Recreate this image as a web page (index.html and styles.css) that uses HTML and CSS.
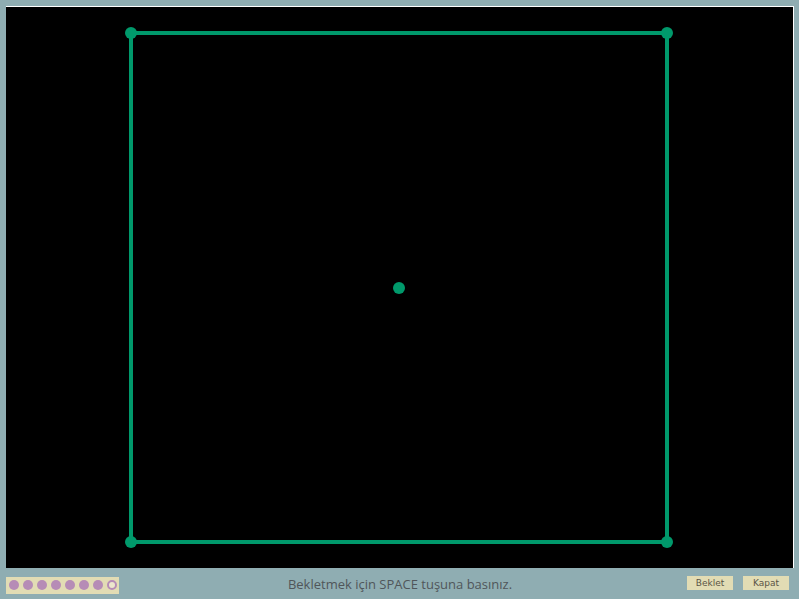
FILE: index.html
```html
<!DOCTYPE html>
<html lang="tr">
<head>
<meta charset="utf-8">
<title>Bekletmek</title>
<link rel="stylesheet" href="styles.css">
</head>
<body>
<div class="app">
  <div class="canvas">
    <svg class="board" width="787" height="561" viewBox="0 0 787 561">
      <rect x="125" y="26" width="536" height="509" fill="none" stroke="#00996b" stroke-width="4"/>
      <circle cx="125" cy="26" r="6" fill="#00996b"/>
      <circle cx="661" cy="26" r="6" fill="#00996b"/>
      <circle cx="125" cy="535" r="6" fill="#00996b"/>
      <circle cx="661" cy="535" r="6" fill="#00996b"/>
      <circle cx="393" cy="281" r="6" fill="#00996b"/>
    </svg>
  </div>
  <div class="bar">
    <div class="dots">
      <span class="dot"></span>
      <span class="dot"></span>
      <span class="dot"></span>
      <span class="dot"></span>
      <span class="dot"></span>
      <span class="dot"></span>
      <span class="dot"></span>
      <span class="dot dot-empty"></span>
    </div>
    <div class="message">Bekletmek için SPACE tuşuna basınız.</div>
    <div class="buttons">
      <button class="btn" type="button">Beklet</button>
      <button class="btn" type="button">Kapat</button>
    </div>
  </div>
</div>
</body>
</html>
```
FILE: styles.css
```css
html, body {
  margin: 0;
  padding: 0;
  background: #8fadb2;
  height: 100%;
  overflow: hidden;
}

.app {
  padding: 6px 0 0 6px;
  font-family: "DejaVu Sans", sans-serif;
}

.canvas {
  width: 788px;
  height: 562px;
  box-sizing: border-box;
  background: #000;
  border-top: 1px solid #ffffff;
  border-right: 1px solid #ffffff;
}

.board {
  display: block;
}

.bar {
  display: grid;
  grid-template-columns: 1fr auto 1fr;
  align-items: start;
  height: 31px;
  padding-right: 5px;
}

.dots {
  justify-self: start;
  margin-top: 9px;
  display: flex;
  gap: 4px;
  padding: 3px 2px 3px 3px;
  background: #e2dcb4;
  height: 11px;
}

.dot {
  width: 10px;
  height: 10px;
  border-radius: 50%;
  background: #b68cb6;
  box-sizing: border-box;
}

.dot-empty {
  background: #ece6cc;
  border: 2px solid #b68cb6;
}

.message {
  margin-top: 7px;
  font-family: "Open Sans", sans-serif;
  font-size: 13px;
  line-height: 18px;
  color: #50565a;
  white-space: nowrap;
}

.buttons {
  justify-self: end;
  margin-top: 8px;
  margin-right: 5px;
  display: flex;
  gap: 10px;
}

.btn {
  width: 46px;
  height: 14px;
  padding: 0;
  border: none;
  background: #e2dcb4;
  font-family: "DejaVu Sans", sans-serif;
  font-size: 9px;
  line-height: 14px;
  color: #5a5446;
  font-weight: normal;
}
```
